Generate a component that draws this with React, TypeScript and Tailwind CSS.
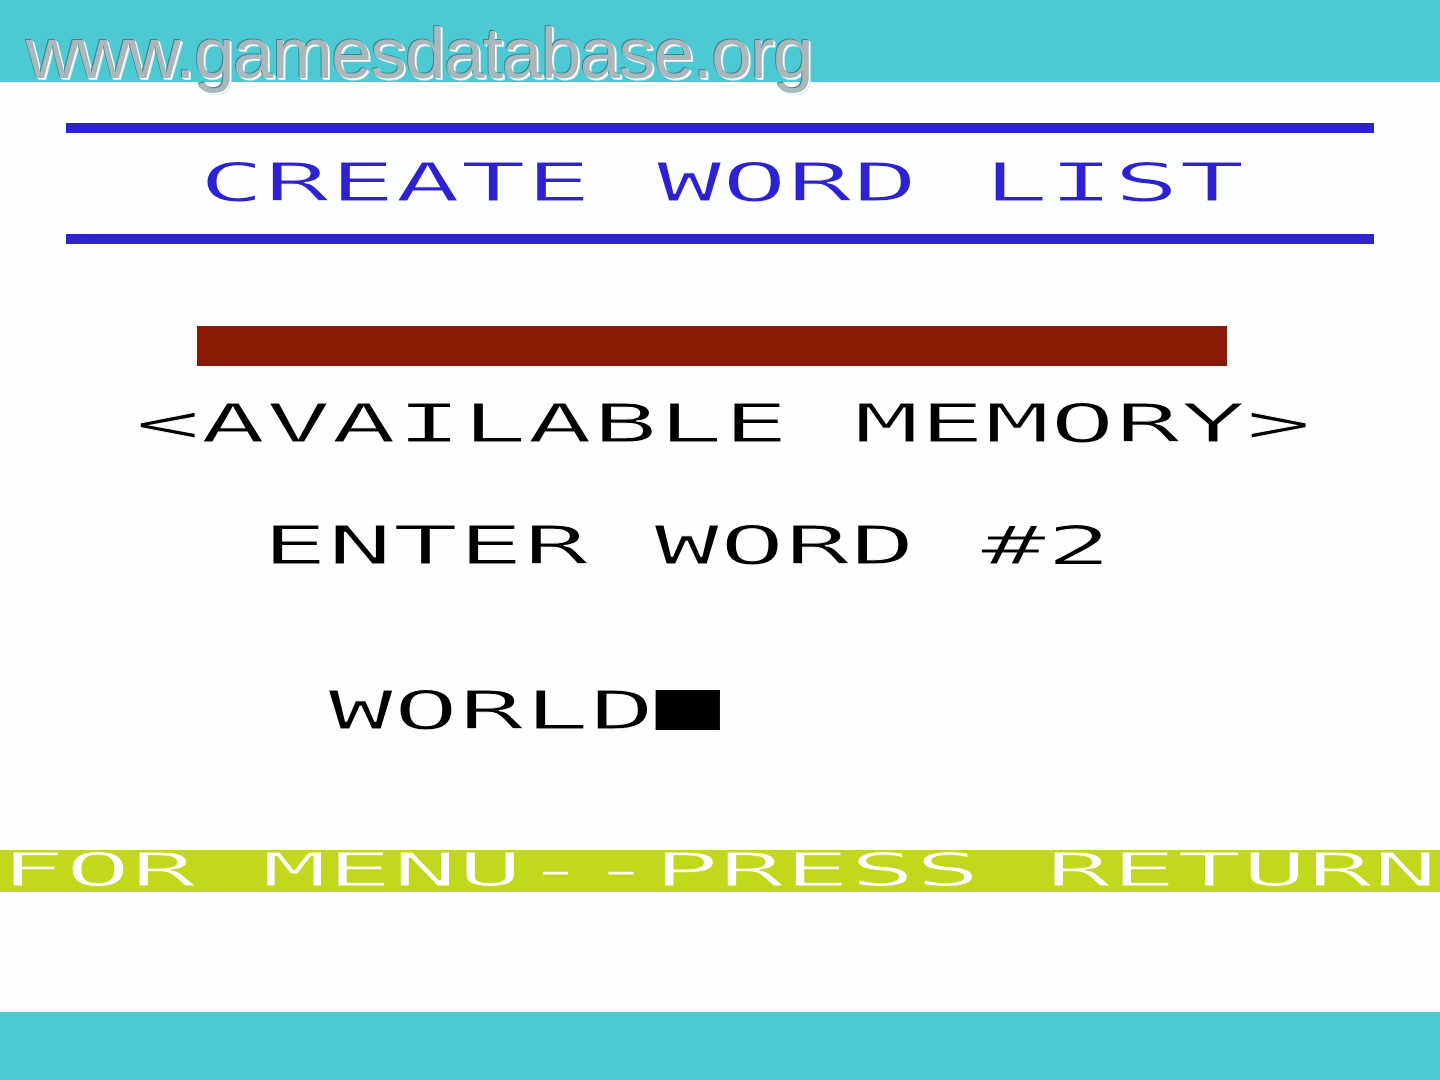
import React from 'react'

// Atari-style 20 column screen: every char cell is ~65px wide, every row 41px high
const screenFont =
  "font-['DejaVu_Sans_Mono',monospace] text-[54px] font-normal [-webkit-text-stroke:1px_#fdfefe]"

interface RowProps {
  className?: string
  children: React.ReactNode
}

const TextRow = ({ className, children }: RowProps) => (
  <div className={`h-[41px] leading-[41px] whitespace-pre ${screenFont} ${className ?? ''}`}>
    <span className="inline-block origin-left scale-x-[2.01]">{children}</span>
  </div>
)

export default function App() {
  return (
    <div className="relative flex h-[1080px] w-[1440px] flex-col overflow-hidden bg-[#fdfefe]">
      {/* top border */}
      <div className="h-[82px] shrink-0 bg-[#4cc9d3]" />

      <div className="flex flex-1 flex-col">
        <div className="mt-[41px] ml-[66px] h-[10px] w-[1308px] bg-[#2c22d4]" />
        <TextRow className="mt-[29px] pl-[199px] text-[#2c22d4]">CREATE WORD LIST</TextRow>
        <div className="mt-[31px] ml-[66px] h-[10px] w-[1308px] bg-[#2c22d4]" />

        {/* memory gauge */}
        <div className="mt-[82px] ml-[197px] h-[40px] w-[1030px] bg-[#8b1a07]" />
        <TextRow className="mt-[37px] pl-[135px] text-black">{'<AVAILABLE MEMORY>'}</TextRow>

        <TextRow className="mt-[81px] pl-[262px] text-black">ENTER WORD #2</TextRow>

        <TextRow className="mt-[124px] pl-[328px] text-black">
          WORLD
          <span className="inline-block h-[40px] w-[32px] bg-black align-top" />
        </TextRow>

        {/* inverse video prompt */}
        <div className="mt-[119px] h-[42px] w-full bg-[#c3d81d] leading-[40px] whitespace-pre font-['DejaVu_Sans_Mono',monospace] text-[46px] text-white [-webkit-text-stroke:1px_#c3d81d]">
          <span className="inline-block origin-left scale-x-[2.36]">FOR MENU--PRESS RETURN</span>
        </div>
      </div>

      {/* bottom border */}
      <div className="h-[68px] shrink-0 bg-[#4cc9d3]" />

      {/* watermark */}
      <div className="absolute top-[16px] left-[26px] font-['Liberation_Sans',Arial,sans-serif] text-[73px] leading-none tracking-[-1.6px] text-[#a9b8bd] [text-shadow:-1px_-1px_0_#3a8a94,1px_1px_0_#ffffff,2px_2px_0_#dfe9eb]">
        www.gamesdatabase.org
      </div>
    </div>
  )
}
